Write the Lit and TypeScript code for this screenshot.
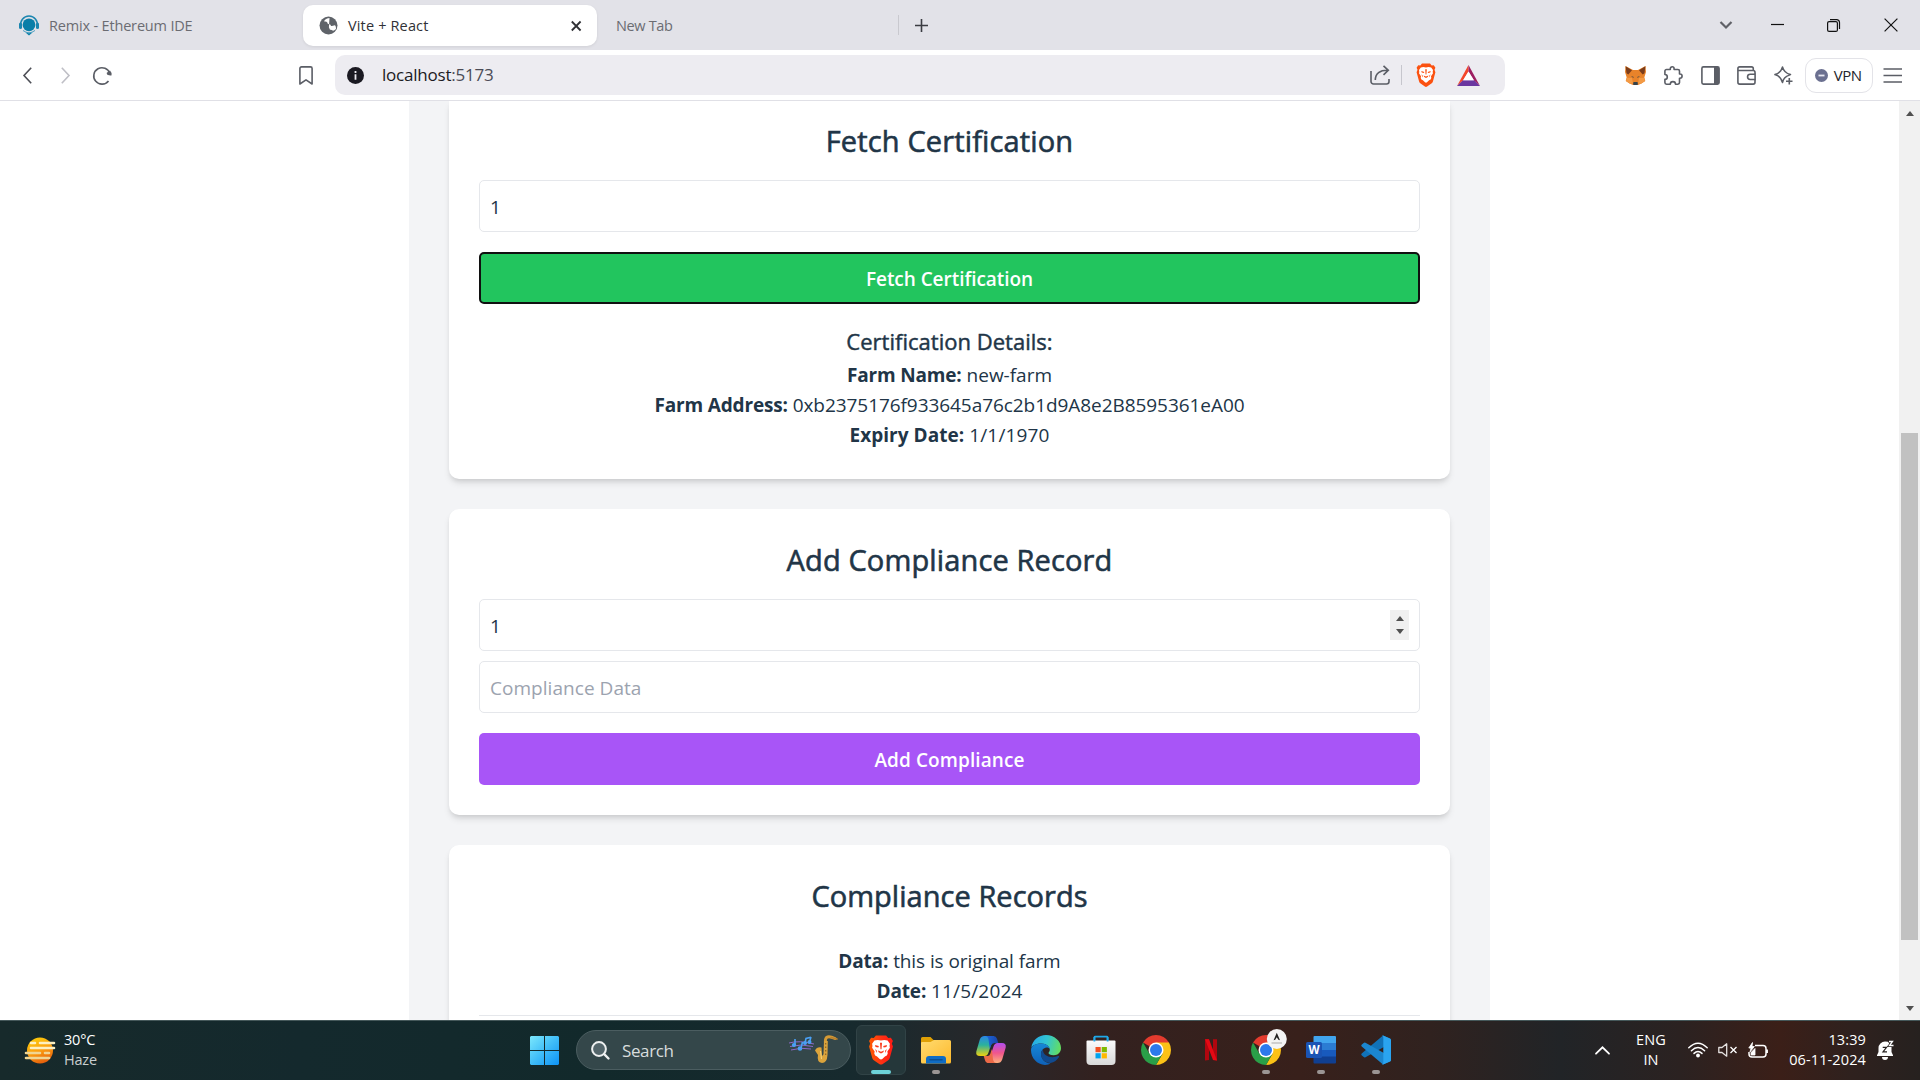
import { LitElement, html, css, svg } from "lit";
import { customElement, property } from "lit/decorators.js";

/* ---------- shared drawings ---------- */

const lionShape = svg`
  <path d="M14 .5h-8L4.300 2.400 2.200 2.300.600 4.800l.9 2-.9 2.400 2.500 9.300c.3 1 .8 1.600 1.500 2.100l4.300 2.900c.7.5 1.500.5 2.200 0l4.300-2.900c.7-.5 1.200-1.100 1.500-2.100l2.500-9.300-.9-2.400.9-2-1.600-2.500-2.100.1z"/>`;

const lionFace = svg`
  <path fill="#fff" d="M10 4.400 12.600 4l2.600.5 1.800 2.600-.3 1.800.3 1.300-2 3.100.3 1.600-.7 1.700-1.500.7-2.100 2-1 .5-1-.5-2.100-2-1.500-.7-.7-1.700.3-1.600-2-3.100.3-1.300L3 7.100l1.800-2.600L7.400 4z"/>`;

const lionMarks = svg`
  <path d="M5.300 8.100 8.300 8.900 7.900 10 5.700 9.600zM14.700 8.100 11.700 8.900 12.100 10 14.300 9.600zM9.200 6.200h1.600L10.400 11.500h-.8zM7.600 12.500 10 13.500l2.400-1-.6 1.500L10 15l-1.800-1zM5.400 11.300l1.400 1.500-.3 1.800zM14.600 11.300l-1.400 1.500.3 1.800z"/>`;

const chromeWheel = svg`
  <path fill="#e33b2e" d="M15 15 2.010 7.500A15 15 0 0 1 27.990 7.500Z"/>
  <path fill="#fbc116" d="M15 7.500H27.990A15 15 0 0 1 15 30L21.500 18.750Z"/>
  <path fill="#2a9f48" d="M2.010 7.500A15 15 0 0 0 15 30L21.500 18.750 8.500 18.750Z"/>
  <circle cx="15" cy="15" r="7.500" fill="#fff"/>
  <circle cx="15" cy="15" r="6" fill="#2c79ec"/>`;

/* ---------- taskbar applications ---------- */

const appIcons: Record<string, unknown> = {
  brave: svg`
    <defs><linearGradient id="bg" x1="0" x2="1"><stop offset="0" stop-color="#ff5a00"/><stop offset=".55" stop-color="#ff2f14"/><stop offset="1" stop-color="#ff1a14"/></linearGradient></defs>
    <g transform="translate(2.300 0) scale(1.270 1.240)"><g fill="url(#bg)">${lionShape}</g>${lionFace}<g fill="#fb3a1c">${lionMarks}</g></g>`,
  folder: svg`
    <defs><linearGradient id="fg" x1="0" y1="0" x2="1" y2="1"><stop offset="0" stop-color="#ffdb70"/><stop offset="1" stop-color="#fdb92c"/></linearGradient></defs>
    <path fill="#dfa005" d="M0 3.500A1.500 1.500 0 0 1 1.500 2H9.500l3 3H20V10H0z"/>
    <path fill="url(#fg)" d="M0 8Q0 7 1 7H9.500L13 5H28.500A1.500 1.500 0 0 1 30 6.500V27Q30 28.500 28.500 28.500H1.500Q0 28.500 0 27z"/>
    <path fill="#0f6cc4" d="M5 28.500V24a3 3 0 0 1 3-3H22a3 3 0 0 1 3 3v4.500z"/>
    <path stroke="#0b4f93" stroke-width="1.500" stroke-linecap="round" d="M9 24.800H21"/>`,
  copilot: svg`
    <defs>
      <linearGradient id="ca" x1="0" y1="0" x2="0" y2="1"><stop offset="0" stop-color="#2a86e8"/><stop offset=".45" stop-color="#2bb29c"/><stop offset="1" stop-color="#f0d10f"/></linearGradient>
      <linearGradient id="cb" x1="0" y1="0" x2="0" y2="1"><stop offset="0" stop-color="#b14df0"/><stop offset=".5" stop-color="#f0568c"/><stop offset="1" stop-color="#fdb07c"/></linearGradient>
      <linearGradient id="cc" x1="0" x2="1"><stop offset="0" stop-color="#1b6be0"/><stop offset="1" stop-color="#1a44a8"/></linearGradient>
    </defs>
    <path fill="url(#ca)" d="M8.500 1H18L12.500 17.500Q11.400 21 8.500 21H4Q-.5 21 .3 16.500L3.800 4.500Q5 1 8.500 1z"/>
    <path fill="url(#cc)" d="M9 1H17.500Q20.200 1 21 3.800L22.300 8H18.500Q15.800 8 15 10.500L13.800 14 12.500 4.500Q12 1 9 1z"/>
    <path fill="url(#cb)" d="M21.500 8H26Q30.500 8 29.700 12.500L26.200 24.500Q25 28 21.500 28H12L17.500 11.500Q18.600 8 21.500 8z"/>
    <path fill="#ec6a48" d="M21 28H12.500Q9.800 28 9 25.200L7.700 21H11.500Q13.600 21 14.400 18.500L15.800 14 17 24.500Q17.800 28 21 28z"/>`,
  edge: svg`
    <defs>
      <linearGradient id="ea" x1="0" x2="1" y1=".3" y2=".5"><stop offset="0" stop-color="#25a9e6"/><stop offset=".5" stop-color="#32c5d2"/><stop offset="1" stop-color="#63dd62"/></linearGradient>
      <linearGradient id="eb" x1="0" x2="0" y1="0" y2="1"><stop offset="0" stop-color="#1687d5"/><stop offset="1" stop-color="#0f61b8"/></linearGradient>
    </defs>
    <path fill="url(#ea)" d="M.3 12.500C1.500 5.200 7.600 0 15 0c8.300 0 15 6 15 13 0 4.600-3.400 7.200-7.200 7.200-3.600 0-5.300-1.300-5.300-2.300 0-.8 1.300-1.200 1.300-3.200 0-3-3.300-6.200-8.300-6.200C5.400 8.500 1.500 10.500.3 12.500z"/>
    <path fill="url(#eb)" d="M10.500 8.500c4.500 0 7.500 2.600 8.200 5.200-1-1-2.300-1.300-3.200-1.200-3 .4-5.400 3-5.400 6.400 0 5.500 4.400 9.300 9.400 9.300-1.300 1-3 1.700-5.500 1.700C6 29.500 0 23.100 0 15c0-4.500 5-6.500 10.500-6.500z"/>
    <path fill="#114a8e" d="M12 14.800c-1.300 1-2 2.500-2 4.300 0 5.200 4.300 9 9.400 9 3.800-.9 6.900-3.200 8.600-6.200.4-.8-.3-1.200-.9-.9-5.600 2.600-15.300.9-15.100-6.200z"/>`,
  store: svg`
    <defs><linearGradient id="sg" x1="0" x2="0" y1="0" y2="1"><stop offset="0" stop-color="#fbfbfb"/><stop offset="1" stop-color="#d9d9d9"/></linearGradient></defs>
    <path fill="none" stroke="#1fa8e8" stroke-width="1.800" d="M8.400 8V2.400A.9.900 0 0 1 9.300 1.700H20.700A.9.900 0 0 1 21.600 2.400V8"/>
    <path fill="url(#sg)" d="M1.500 5.500H28.500Q29.500 5.500 29.500 6.500V26a4 4 0 0 1-4 4H4.500a4 4 0 0 1-4-4V6.500Q.5 5.500 1.500 5.500z"/>
    <path stroke="#1fa8e8" stroke-width="1.800" d="M8.400 6.500V2M21.600 6.500V2"/>
    <path fill="#f25022" d="M9.500 12h5.200v5.200H9.500z"/><path fill="#7fba00" d="M15.700 12h5.200v5.200h-5.200z"/><path fill="#00a4ef" d="M9.500 18.200h5.200v5.200H9.500z"/><path fill="#ffb900" d="M15.700 18.200h5.200v5.200h-5.200z"/>`,
  chrome: chromeWheel,
  netflix: svg`
    <path fill="#b1060f" d="M9 4.200h4V25l-4 .5zM17 4.200h4V25.500l-4-.5z"/>
    <path fill="#e50914" d="M9 4.200h4L21 25.500 17 25z"/>`,
  chromeProfile: svg`${chromeWheel}
    <circle cx="25.800" cy="4" r="10" fill="#f4f4f4"/>
    <path fill="#222" d="M25.800-2.300 29 5.200 27.400 4.700 25.800 2.200 24.200 4.700 22.600 5.200z"/>
    <path stroke="#aaa" stroke-width="1" d="M20.500 8h10.500"/>`,
  word: svg`
    <path fill="#41a5ee" d="M8.500 1H29Q30 1 30 2V8.500H7.500V2Q7.500 1 8.500 1z"/>
    <path fill="#2b7cd3" d="M7.500 8H30v7H7.500z"/><path fill="#185abd" d="M7.500 15H30v7H7.500z"/>
    <path fill="#103f91" d="M7.500 21.500H30V27.500Q30 28.500 29 28.500H8.500Q7.500 28.500 7.500 27.500z"/>
    <rect x="0" y="7" width="16" height="16" rx="1.500" fill="#1a54b4"/>
    <text class="w" x="8" y="19" text-anchor="middle">W</text>`,
  vscode: svg`
    <path fill="#1172b8" d="M22 .5 29 3.500Q30 4 30 5V8L4.500 22.200Q3.500 22.800 2.700 22L.6 20.200Q-.2 19.400.7 18.600z"/>
    <path fill="#1b86cf" d="M22 29.500 29 26.500Q30 26 30 25V22L4.500 7.800Q3.500 7.200 2.700 8L.6 9.800Q-.2 10.600.7 11.400z"/>
    <path fill="#2aa4f0" d="M22 .5 29 3.600Q30 4.100 30 5.200V24.800Q30 25.900 29 26.400L22 29.500Q21 29.500 20.600 29 22.300 30 22.300 27.500V2.500Q22.300.2 20.600 1 21.200.2 22 .5z"/>`,
};

/** One application on the taskbar, with its running state below it. */
@customElement("task-app")
export class TaskApp extends LitElement {
  @property() name = "";
  @property() state = "";
  static styles = css`
    :host { display: block; width: 50px; height: 50px; }
    .tile { box-sizing: border-box; width: 50px; height: 50px; border-radius: 6px; border: 1px solid transparent;
      display: flex; flex-direction: column; align-items: center; padding-top: 9px; gap: 5px; }
    .tile.active { background: #25373a; border-color: #314346; }
    svg { width: 30px; height: 30px; overflow: visible; display: block; flex: none; }
    .dot { width: 8px; height: 4px; border-radius: 2px; background: #9b9594; }
    .active .dot { width: 20px; background: #6dd2d8; }
    .idle .dot { display: none; }
    .w { font: 700 11.500px "Open Sans", sans-serif; fill: #fff; }
  `;
  render() {
    return html`<div class="tile ${this.state || "idle"}">
      <svg viewBox="0 0 30 30">${appIcons[this.name]}</svg><i class="dot"></i></div>`;
  }
}

/* ---------- browser chrome ---------- */

@customElement("browser-tabs")
export class BrowserTabs extends LitElement {
  static styles = css`
    :host { display: flex; height: 50px; background: #e2e2e8; align-items: flex-start; color: #6b6c72; font-size: 14.500px; }
    svg { display: block; flex: none; overflow: visible; }
    .tab { display: flex; align-items: center; height: 41px; margin-top: 5px; box-sizing: border-box; white-space: nowrap; }
    .first { width: 303px; padding-left: 18px; gap: 9px; }
    .current { width: 294px; padding: 0 14px 0 16px; gap: 10px; background: #fff; border-radius: 10px; color: #303136;
      box-shadow: 0 1px 3px rgba(0, 0, 0, .08); }
    .current .name { flex: 1; letter-spacing: .15px; }
    .first .name { letter-spacing: -.175px; }
    .last { width: 302px; padding-left: 19px; justify-content: space-between; }
    .last .name { letter-spacing: -.35px; }
    .sep { width: 1px; height: 20px; background: #c9c9cf; margin-bottom: 2px; }
    .plus { margin: 18.500px 0 0 16px; }
    .window { display: flex; margin-left: auto; align-items: center; height: 50px; padding-right: 22px; }
    .down { margin-right: 39px; } .min { margin-right: 43px; } .max { margin-right: 44px; }
  `;
  render() {
    return html`
      <div class="tab first">
        <svg width="22" height="22" viewBox="0 0 22 22">
          <circle cx="11" cy="9.800" r="6.400" fill="#0a7ea8"/>
          <path fill="none" stroke="#1c86b0" stroke-width="1.500" d="M3 11.500A8.300 8.300 0 1 1 19 11.500"/>
          <path fill="none" stroke="#4ba0c2" stroke-width="1" d="M5 15.500Q11 20 17 15.500"/>
          <rect x="1" y="7.500" width="3" height="6.500" rx="1.500" fill="#1c86b0"/><rect x="18" y="7.500" width="3" height="6.500" rx="1.500" fill="#1c86b0"/>
          <path fill="#0a7ea8" d="M7.500 17.500Q11 19 14.500 17.500L11 20.500z"/>
        </svg><span class="name">Remix - Ethereum IDE</span>
      </div>
      <div class="tab current">
        <svg width="19" height="19" viewBox="0 0 19 19">
          <circle cx="9.500" cy="9.500" r="9" fill="#5f6369"/>
          <path fill="#fff" d="M10.500 2Q5 3 5.200 5.600 7.500 5.200 8.300 6.500 8.300 8.300 10.300 8.200 11.900 8.300 12 9.900 13.500 10.100 15.600 9.300 17 9.500 17 13 14.200 15.500 13.200 14.200 12.700 13.500 11 13.800 10.400 12.300 9.900 11.200 8.300 11.200H6.800Q5.600 10.800 5 9.400 3.500 9.300 2 8.700 1.800 13.500 5.500 16 9 18 12.500 16.700L8.800 17.300 7.200 15.300Q6.600 13.200 5 12.500 2.500 11 2 8.700 3 4 7 2.400 9 1.700 10.500 2z"/>
        </svg><span class="name">Vite + React</span>
        <svg width="14" height="14" viewBox="0 0 14 14"><path stroke="#303136" stroke-width="1.800" d="m2.800 2.500 8.800 9m0-9-8.800 9"/></svg>
      </div>
      <div class="tab last"><span class="name">New Tab</span><i class="sep"></i></div>
      <svg class="plus" width="13" height="13" viewBox="0 0 13 13"><path stroke="#3b3c42" stroke-width="1.600" d="M6.500 0v13M0 6.500h13"/></svg>
      <div class="window">
        <svg class="down" width="12" height="8" viewBox="0 0 12 8"><path fill="none" stroke="#606167" stroke-width="2.200" d="m.5 1 5.500 5.500L11.500 1"/></svg>
        <svg class="min" width="13" height="2" viewBox="0 0 13 2"><path stroke="#111" stroke-width="1.200" d="M0 .5h13"/></svg>
        <svg class="max" width="13" height="13" viewBox="0 0 13 13"><g fill="none" stroke="#111" stroke-width="1.200"><rect x=".6" y="2.600" width="9.800" height="9.800" rx="1.500"/><path d="M3 .7h6.700a2.800 2.800 0 0 1 2.800 2.800V10"/></g></svg>
        <svg width="14" height="14" viewBox="0 0 14 14"><path stroke="#111" stroke-width="1.200" d="m.6.6 12.800 12.800m0-12.800L.6 13.400"/></svg>
      </div>`;
  }
}

@customElement("browser-toolbar")
export class BrowserToolbar extends LitElement {
  static styles = css`
    :host { display: flex; box-sizing: border-box; height: 51px; background: #fff; border-bottom: 1px solid #e0e0e6;
      align-items: center; padding-left: 23px; }
    svg { display: block; flex: none; overflow: visible; fill: none; stroke: #5b5e66; stroke-width: 1.600; }
    .back { stroke: #4d4f56; } .fwd { margin-left: 29px; stroke: #bfbfc6; } .load { margin-left: 23px; } .mark { margin-left: 187px; }
    .filled { stroke: none; }
    .address { display: flex; align-items: center; box-sizing: border-box; width: 1170px; height: 40px; margin-left: 22px; padding: 0 25px 0 12px;
      border-radius: 10px; background: #edecf1; font-size: 17px; color: #1b1a22; letter-spacing: -.218px; }
    .url { margin-left: 18px; flex: 1; padding-bottom: 2px; } .port { color: #4b4b55; }
    .bar { width: 1px; height: 20px; background: #c6c6cd; margin: 0 14px 0 11px; }
    .bat { margin-left: 21px; }
    .tools { display: flex; align-items: center; margin-left: 120px; gap: 17.800px; }
    .vpn { display: flex; align-items: center; box-sizing: border-box; width: 68px; height: 35px; margin-left: 11.500px; padding-left: 9px; gap: 6px;
      border: 1.500px solid #e3e3e8; border-radius: 11px; font-size: 15px; letter-spacing: -.480px; color: #23242b; }
    .menu { margin-left: 10px; }
  `;
  render() {
    return html`
      <svg class="back" width="9" height="17" viewBox="0 0 9 17"><path d="M8.200.7 1 8.500l7.200 7.800"/></svg>
      <svg class="fwd" width="9" height="17" viewBox="0 0 9 17"><path d="M.8.7 8 8.500.8 16.300"/></svg>
      <svg class="load" width="19" height="19" viewBox="0 0 19 19"><path d="M15.500 14.900A8.200 8.200 0 1 1 16.800 7.500"/><path fill="#5b5e66" stroke="none" d="M13.600 7Q15 5.500 17 4.500 19 6.500 18.600 9.300 17 9.800 14.300 8.800z"/></svg>
      <svg class="mark" width="14" height="19" viewBox="0 0 14 19"><path stroke-linejoin="round" d="M2.500.9h9A1.600 1.600 0 0 1 13.100 2.500V18L7 13.900.9 18V2.500A1.600 1.600 0 0 1 2.500.9z"/></svg>
      <div class="address">
        <svg width="17" height="17" viewBox="0 0 17 17"><circle cx="8.500" cy="8.500" r="8.500" fill="#1b1a22" stroke="none"/><path stroke="#edecf1" stroke-width="1.800" d="M8.500 7.200v5.500M8.500 4.100v1.900"/></svg>
        <span class="url">localhost<span class="port">:5173</span></span>
        <svg width="20" height="20" viewBox="0 0 20 20"><path d="M1 6v10.500A2.500 2.500 0 0 0 3.500 19h13a2.500 2.500 0 0 0 2.500-2.500V14"/><path d="M5.300 15Q5.500 5 18 5.300M13.500.8 18.300 5.300 13.500 9.800"/></svg>
        <i class="bar"></i>
        <svg class="filled" width="20" height="24" viewBox="0 0 20 24"><g fill="#fb5110">${lionShape}</g>${lionFace}<g fill="#fb5110">${lionMarks}</g></svg>
        <svg class="bat filled" width="23" height="21" viewBox="0 0 23 21"><path fill="#f4472c" d="M11.500 0v6.500L6 15.500 0 21z"/><path fill="#9d1f62" d="M11.500 0 23 21l-6-5.500-5.500-9z"/><path fill="#6a36a0" d="M0 21 6 15.200H17L23 21z"/><path fill="#fff" d="M11.500 6.500 16.900 15.300H6.100z"/></svg>
      </div>
      <div class="tools">
        <svg class="filled" width="21" height="19" viewBox="0 0 21 19"><path fill="#e8832a" d="M.5 0 8 4h5L20.500 0l.5 6-1.700 5.500L20.300 15 16 17.800 13 19H8l-3-1.200L.7 15l1-3.500L0 6z"/><path fill="#7b3d1c" d="M.6.2 7 4.200 3.300 8.500 1.500 7.200zM20.400.2 14 4.200l3.700 4.300 1.800-1.300z"/><path fill="#f39a45" d="M1.700 11.800 7 12l1 5.500-3 .3L1 15zM19.300 11.800 14 12l-1 5.500 3 .3 4-2.800z"/><path fill="#35424a" d="m6 10.300 2.400.4.200 1.400zM15 10.300l-2.400.4-.2 1.400zM8.500 16h4l.5 2.500-1 .5H9l-1-.5z"/></svg>
        <svg width="19" height="19" viewBox="0 0 19 19"><path stroke-linejoin="round" d="M2.500 3.500H6.300V2.700a1.900 1.900 0 0 1 3.800 0V3.500H13.900A1.600 1.600 0 0 1 15.500 5.100V8H16a2.100 2.100 0 0 1 0 4.200H15.500V16.600A1.600 1.600 0 0 1 13.900 18.200H11.500A2.600 2.600 0 0 0 6.300 18.200H2.500A1.600 1.600 0 0 1 .9 16.600V13.300A2.400 2.400 0 0 0 .9 8.500V5.100A1.600 1.600 0 0 1 2.500 3.500z"/></svg>
        <svg width="19" height="19" viewBox="0 0 19 19"><rect x=".9" y=".9" width="17.200" height="17.200" rx="1.500"/><path fill="#5b5e66" stroke="none" d="M13 1h5v17h-5z"/></svg>
        <svg width="19" height="19" viewBox="0 0 19 19"><path d="M18 13.500V16.300A1.800 1.800 0 0 1 16.200 18.100H2.700A1.800 1.800 0 0 1 .9 16.300V2.700A1.800 1.800 0 0 1 2.700.9H14.500A1.800 1.800 0 0 1 16.300 2.700V4.500M.9 4.500H16.200A1.800 1.800 0 0 1 18 6.300V8"/><path d="M18.100 8.200H13.200a2.600 2.600 0 0 0 0 5.300H18.100z"/></svg>
        <svg width="19" height="19" viewBox="0 0 19 19"><path stroke-linejoin="round" stroke-width="1.500" d="M8.500.9Q10 7 16.500 8.600 12 10 10.600 12 9.200 13.600 8.500 16.500 6.600 10 .9 8.600 7 7 8.500.9z"/><path d="M15.300 12v6.500M12 15.300h6.500"/></svg>
      </div>
      <div class="vpn"><svg width="13" height="13" viewBox="0 0 13 13"><circle cx="6.500" cy="6.500" r="6.500" fill="#6b7090" stroke="none"/><path stroke="#e8e8f2" stroke-width="1.800" d="M3.500 6.500h6"/></svg>VPN</div>
      <svg class="menu" width="20" height="15" viewBox="0 0 20 15"><path stroke-width="1.500" d="M.5.9h18.500M.5 7.500h18.500M.5 14h18.500"/></svg>`;
  }
}

/* ---------- the farm certification page ---------- */

@customElement("farm-page")
export class FarmPage extends LitElement {
  static styles = css`
    :host { display: flex; height: 919px; overflow: hidden; background: #fff; color: #213547; font-size: 19px; }
    .view { flex: 1; display: flex; justify-content: center; overflow: hidden; }
    .panel { width: 1081px; flex: none; box-sizing: border-box; padding: 0 40px; background: #f3f4f6; height: 1100px; display: flex; flex-direction: column; gap: 30px; }
    .card { background: #fff; border-radius: 10px; padding: 30px; text-align: center;
      box-shadow: 0 5px 7.500px -1px rgba(0, 0, 0, .1), 0 2.500px 5px -2px rgba(0, 0, 0, .1); }
    .cut { padding-top: 19px; border-top-left-radius: 0; border-top-right-radius: 0; }
    h2 { margin: 0 0 20px; height: 40px; line-height: 41px; font-weight: 400; font-size: 29px; letter-spacing: .14px; -webkit-text-stroke: .6px currentColor; }
    .tight { letter-spacing: .04px; }
    h3 { margin: 20px 0 0; height: 35px; line-height: 35px; font-weight: 400; font-size: 22px; letter-spacing: .02px; -webkit-text-stroke: .45px currentColor; }
    p { margin: 0; height: 30px; line-height: 33px; white-space: nowrap; }
    b { font-weight: 700; letter-spacing: -.170px; }
    .wide { letter-spacing: .05px; }
    .hash { letter-spacing: -.062px; } .num { letter-spacing: .15px; } .orig { letter-spacing: -.088px; }
    .field { box-sizing: border-box; height: 52px; border: 1px solid #e5e7eb; border-radius: 5px; padding: 0 10px; display: flex; align-items: center;
      justify-content: space-between; margin-bottom: 10px; }
    .value { padding-top: 1px; }
    .hint { color: #9ca3af; letter-spacing: .04px; }
    .spin { width: 19px; height: 30px; background: #f0f0f0; display: flex; flex-direction: column; align-items: center; justify-content: center; gap: 8px; }
    .btn { box-sizing: border-box; height: 52px; line-height: 52px; border-radius: 5px; margin-top: 20px; color: #fff; font-weight: 600; padding-top: 1px; }
    .fetch { background: #22c55e; border: 2px solid #101010; line-height: 48px; letter-spacing: -.05px; }
    .add { background: #a855f7; letter-spacing: .087px; }
    .record { padding: 10px 0; border-bottom: 1px solid #e5e7eb; }
    .up, .dn { display: block; border: 4.500px solid transparent; border-top: 0; border-bottom: 5px solid #505050; }
    .dn { border-bottom: 0; border-top: 5px solid #505050; }
    .scroll { width: 21px; background: #f1f1f1; display: flex; flex-direction: column; align-items: center; box-sizing: border-box; padding: 10px 0 9px; }
    .thumb { width: 17px; height: 507px; background: #c1c1c1; margin: 317px 0 auto; }
  `;
  render() {
    return html`
      <div class="view"><div class="panel">
        <section class="card cut">
          <h2>Fetch Certification</h2>
          <div class="field"><span class="value">1</span></div>
          <div class="btn fetch">Fetch Certification</div>
          <h3>Certification Details:</h3>
          <p><b>Farm Name:</b> new-farm</p>
          <p><b>Farm Address:</b> <span class="hash">0xb2375176f933645a76c2b1d9A8e2B8595361eA00</span></p>
          <p><b class="wide">Expiry Date:</b> <span class="num">1/1/1970</span></p>
        </section>
        <section class="card">
          <h2>Add Compliance Record</h2>
          <div class="field"><span class="value">1</span><span class="spin"><i class="up"></i><i class="dn"></i></span></div>
          <div class="field hint"><span class="value">Compliance Data</span></div>
          <div class="btn add">Add Compliance</div>
        </section>
        <section class="card">
          <h2 class="tight">Compliance Records</h2>
          <div class="record">
            <p><b>Data:</b> <span class="orig">this is original farm</span></p>
            <p><b>Date:</b> <span class="num">11/5/2024</span></p>
          </div>
        </section>
      </div></div>
      <div class="scroll"><i class="up"></i><i class="thumb"></i><i class="dn"></i></div>`;
  }
}

/* ---------- desktop taskbar ---------- */

@customElement("desktop-taskbar")
export class DesktopTaskbar extends LitElement {
  static styles = css`
    :host { display: flex; box-sizing: border-box; height: 60px; align-items: center; padding-bottom: 1px; border-top: 1px solid #45585a; color: #fff; font-size: 14.500px;
      background: linear-gradient(90deg, #172a2b 0, #14292d 300px, #12292b 600px, #172a2e 850px, #29272a 1000px, #33211f 1100px, #38201b 1300px, #30221f 1430px, #212427 1560px, #2b2221 1680px, #3b1f18 1780px, #2f211e 1850px, #26211f 100%); }
    svg { display: block; flex: none; overflow: visible; }
    .weather { display: flex; align-items: center; width: 530px; box-sizing: border-box; padding-left: 25px; gap: 9px; line-height: 20px; letter-spacing: -.2px; }
    .weather div { padding-bottom: 1px; }
    .weather span { display: block; } .dim { color: #c8cecf; }
    .find { box-sizing: border-box; width: 275px; height: 40px; margin: 0 5px 0 17px; border: 1px solid #4b5d60; border-radius: 20px; background: #34474a;
      display: flex; align-items: center; padding: 0 12px 0 14px; font-size: 17px; letter-spacing: -.38px; color: #d8dddd; }
    .find span { flex: 1; margin-left: 12px; }
    .apps { display: flex; gap: 5px; }
    .tray { display: flex; align-items: center; margin-left: auto; line-height: 20px; padding-right: 25px; }
    .lang { text-align: center; width: 30px; margin: 0 22px 0 26px; letter-spacing: .1px; }
    .clock { text-align: right; width: 80px; letter-spacing: .12px; margin: 0 11px 0 17px; }
    .next { margin-left: 10px; }
  `;
  render() {
    const apps: [string, string][] = [["brave", "active"], ["folder", "running"], ["copilot", ""], ["edge", ""], ["store", ""], ["chrome", ""],
      ["netflix", ""], ["chromeProfile", "running"], ["word", "running"], ["vscode", "running"]];
    return html`
      <div class="weather">
        <svg width="30" height="27" viewBox="0 0 30 27">
          <defs><linearGradient id="sun" x1=".3" y1="0" x2=".7" y2="1"><stop offset="0" stop-color="#fccb0a"/><stop offset=".5" stop-color="#fb9d10"/><stop offset="1" stop-color="#e35a0c"/></linearGradient></defs>
          <circle cx="15" cy="13.500" r="13" fill="url(#sun)"/>
          <g stroke-linecap="round" stroke-width="2.600"><path stroke="#fdf0c0" d="M6 6h4M15 6h14M6 11h23"/><path stroke="#f0d592" d="M1 16h14M20 16h4M1 21h23"/></g>
        </svg>
        <div><span>30°C</span><span class="dim">Haze</span></div>
      </div>
      <svg width="29" height="29" viewBox="0 0 29 29">
        <defs><linearGradient id="win" x1="0" y1="0" x2="1" y2="1"><stop offset="0" stop-color="#7ce8fc"/><stop offset=".5" stop-color="#40bdf8"/><stop offset="1" stop-color="#0d92f4"/></linearGradient></defs>
        <path fill="url(#win)" d="M1 0h13v14H0V1zM15 0h13l1 1v13H15zM0 15h14v14H1l-1-1zM15 15h14v13l-1 1H15z"/>
      </svg>
      <div class="find">
        <svg width="19" height="19" viewBox="0 0 19 19"><circle cx="8" cy="8" r="6.900" fill="#53656a" stroke="#eef0f0" stroke-width="2"/><path stroke="#eef0f0" stroke-width="2.400" stroke-linecap="round" d="m13.200 13.200 4.300 4.300"/></svg>
        <span>Search</span>
        <svg width="49" height="30" viewBox="0 0 49 30">
          <g fill="none" stroke="#8c68c8" stroke-width="1"><path d="M0 8Q10 5 25 9M1 11.500Q12 8.500 24 11.500M2 15Q12 12 22 14"/></g>
          <g fill="#4aa0f4" stroke="#4aa0f4" stroke-width="1.600"><path fill="none" d="M6 10V4M12 13 13.500 7M20.500 7 22 2M16 8 17 3.500 22 2.200"/><circle cx="5" cy="10" r="1.300"/><circle cx="11" cy="13.500" r="1.500"/><circle cx="16" cy="8" r="1.200"/><circle cx="20.500" cy="7" r="1.200"/></g>
          <path fill="none" stroke="#d59a35" stroke-width="3" stroke-linecap="round" d="M46 3.500Q40 .8 37.500 2.500 36 4 36.500 8"/>
          <path fill="none" stroke="#b9822f" stroke-width="1.500" stroke-linecap="round" d="M42 2.500 48 4"/>
          <path fill="#dca43c" d="M35 6h3.800L38.500 20Q38 28 33 28 27.500 27 29 20L26 15.500Q28 11.500 32.500 12.500L33 20Q33.500 22 34.500 19z"/>
          <path stroke="#8e6224" stroke-width="1.200" stroke-dasharray="1.500 2" d="M36.700 8v14"/><path stroke="#f6d67c" d="M31.500 16l1 8"/>
        </svg>
      </div>
      <div class="apps">${apps.map(([n, s]) => html`<task-app .name=${n} .state=${s}></task-app>`)}</div>
      <div class="tray">
        <svg width="15" height="9" viewBox="0 0 15 9"><path fill="none" stroke="#fff" stroke-width="1.800" stroke-linecap="round" d="m1 7.700 6.500-6.400L14 7.700"/></svg>
        <div class="lang">ENG<br>IN</div>
        <svg width="20" height="16" viewBox="0 0 20 16"><g fill="none" stroke="#fff" stroke-width="1.500" stroke-linecap="round"><path d="M.8 5.800Q10-3.200 19.200 5.800M3.400 8.700Q10 2.400 16.600 8.700M6 11.400Q10 7.600 14 11.400"/></g><circle cx="10" cy="13.500" r="1.900" fill="#fff"/></svg>
        <svg class="next" width="20" height="14" viewBox="0 0 20 14"><g fill="none" stroke="#e4e0df" stroke-width="1.300" stroke-linejoin="round"><path d="M.8 4.500H4L8.700.8V13.200L4 9.500H.8z"/><path stroke="#fff" d="m12.500 4 6 6m0-6-6 6"/></g></svg>
        <svg class="next" width="21" height="17" viewBox="0 0 21 17"><path fill="none" stroke="#fff" stroke-width="1.500" d="M7 3.500H15a3 3 0 0 1 3 3V12a3 3 0 0 1-3 3H4a3 3 0 0 1-3-3V10M19.200 7.500v3.500"/><path fill="#fff" stroke="#fff" stroke-width=".8" d="M4.500.5.800 6H3L2 10 6.300 4.500H4zM3 13V10.500L7 6.500V13z"/></svg>
        <div class="clock">13:39<br>06-11-2024</div>
        <svg width="18" height="20" viewBox="0 0 18 20"><path fill="#fff" d="M8 1.500A6.500 6.500 0 0 0 1.500 8V12L0 15.200V16H16V15.200L14.500 12V7L11 1.800zM5 17h6a3 3 0 0 1-6 0z"/><path fill="none" stroke="#26211f" stroke-width="1.200" d="M5.700 7.300h3.800L6 11.800h4"/><path fill="none" stroke="#26211f" stroke-width="2.800" d="M12 1.500H15.500L12.500 5.500H16"/><path fill="none" stroke="#fff" stroke-width="1.300" d="M12 1.500H15.500L12.500 5.500H16.500"/></svg>
      </div>`;
  }
}

@customElement("app-root")
export class AppRoot extends LitElement {
  static styles = css`
    :host { display: flex; flex-direction: column; width: 1920px; height: 1080px; overflow: hidden; font-family: "Open Sans", "Noto Sans", sans-serif; }
  `;
  render() {
    return html`<browser-tabs></browser-tabs><browser-toolbar></browser-toolbar><farm-page></farm-page><desktop-taskbar></desktop-taskbar>`;
  }
}
